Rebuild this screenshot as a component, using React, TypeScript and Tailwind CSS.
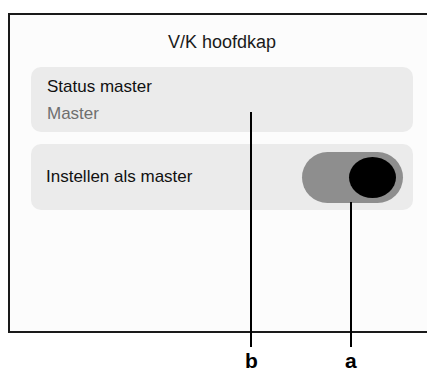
import { useState } from "react";

const App = () => {
  const [master, setMaster] = useState(true);

  return (
    <div className="relative w-[427px] h-[372px] bg-white overflow-hidden font-['Liberation_Sans',Arial,sans-serif]">
      {/* Device frame */}
      <div className="ml-[8px] mt-[13px] w-[428px] h-[320px] border-2 border-[#1a1a1a] bg-[#fcfcfc] px-[21px]">
        <h1 className="h-[52px] flex items-center justify-center text-[18px] text-[#1a1a1a] pt-[3px]">
          V/K hoofdkap
        </h1>

        <div className="flex flex-col gap-[12px]">
          {/* Status card */}
          <div className="h-[65px] rounded-[10px] bg-[#ebebeb] px-[16px] pt-[9px]">
            <p className="text-[17px] leading-[22px] text-[#111]">Status master</p>
            <p className="text-[17px] leading-[22px] mt-[5px] text-[#6f6f6f]">Master</p>
          </div>

          {/* Master toggle card */}
          <div className="h-[66px] rounded-[10px] bg-[#ebebeb] pl-[15px] pr-[10px] flex items-center justify-between">
            <span className="text-[17px] text-[#111]">Instellen als master</span>
            <button
              onClick={() => setMaster(!master)}
              className={`w-[101px] h-[51px] rounded-full bg-[#8e8e8e] flex items-center px-[7px] ${
                master ? "justify-end" : "justify-start"
              }`}
            >
              <span className="w-[47px] h-[41px] rounded-[50%] bg-black" />
            </button>
          </div>
        </div>
      </div>

      {/* Annotation lines */}
      <div className="absolute left-[250px] top-[112px] w-[2px] h-[235px] bg-black" />
      <div className="absolute left-[350px] top-[202px] w-[2px] h-[145px] bg-black" />
      <span className="absolute left-[245px] top-[350px] text-[21px] font-bold leading-[21px] text-black">
        b
      </span>
      <span className="absolute left-[345px] top-[350px] text-[21px] font-bold leading-[21px] text-black">
        a
      </span>
    </div>
  );
};

export default App;
